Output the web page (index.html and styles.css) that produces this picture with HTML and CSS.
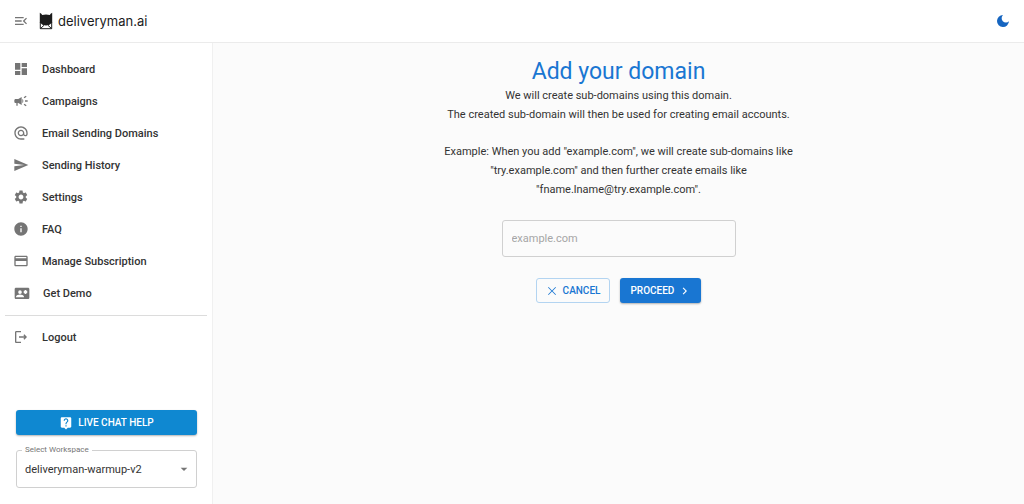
FILE: index.html
```html
<!DOCTYPE html>
<html lang="en">
<head>
<meta charset="utf-8">
<meta name="viewport" content="width=device-width, initial-scale=1">
<title>deliveryman.ai</title>
<link rel="stylesheet" href="styles.css">
</head>
<body>
<header class="topbar">
  <button class="icon-button" type="button" aria-label="Collapse menu">
    <svg class="icon" viewBox="0 0 24 24"><path d="M3 18h13v-2H3v2zm0-5h10v-2H3v2zm0-7v2h13V6H3zm18 9.59L17.42 12 21 8.41 19.59 7l-5 5 5 5L21 15.59z"/></svg>
  </button>
  <a class="brand" href="#">
    <svg class="brand-mark" viewBox="0 0 14 18"><path d="M.8.800Q2.600 1.600 3.200 3Q7 2 10.800 3Q11.400 1.600 13.200.800V10.500L10.500 12.700Q7 14.200 3.500 12.700L.8 10.500Z"/><path class="brand-line" d="M1.300 10V16.700H12.700V10M1.500 16.500L5 13.300M12.500 16.500L9 13.300"/></svg>
    <span>deliveryman.ai</span>
  </a>
  <button class="icon-button theme-toggle" type="button" aria-label="Toggle dark mode">
    <svg class="icon" viewBox="0 0 24 24"><path d="M12 3a9 9 0 1 0 9 9.500a5.500 5.500 0 0 1-9-9.500z"/></svg>
  </button>
</header>
<div class="shell">
  <aside class="sidebar">
    <nav class="nav">
      <a class="nav-item" href="#"><svg class="icon" viewBox="0 0 24 24"><path d="M3 13h8V3H3v10zm0 8h8v-6H3v6zm10 0h8V11h-8v10zm0-18v6h8V3h-8z"/></svg>Dashboard</a>
      <a class="nav-item" href="#"><svg class="icon" viewBox="0 0 24 24"><path d="M18 11v2h4v-2h-4zm-2 6.610c.96.710 2.210 1.650 3.200 2.390.4-.53.8-1.070 1.200-1.600-.99-.74-2.240-1.680-3.200-2.400-.4.540-.8 1.080-1.200 1.610zM20.400 5.600c-.4-.53-.8-1.070-1.200-1.600-.99.740-2.240 1.680-3.200 2.400.4.530.8 1.070 1.200 1.600.96-.72 2.210-1.650 3.200-2.400zM4 9c-1.100 0-2 .9-2 2v2c0 1.100.9 2 2 2h1v4h2v-4h1l5 3V6L8 9H4zm11.500 3c0-1.330-.58-2.530-1.500-3.350v6.690c.92-.81 1.500-2.010 1.500-3.340z"/></svg>Campaigns</a>
      <a class="nav-item" href="#"><svg class="icon" viewBox="0 0 24 24"><path d="M12 1.950c-5.520 0-10 4.480-10 10s4.480 10 10 10h5v-2h-5c-4.340 0-8-3.660-8-8s3.660-8 8-8 8 3.660 8 8v1.430c0 .79-.71 1.570-1.500 1.570s-1.500-.78-1.500-1.570v-1.430c0-2.760-2.240-5-5-5s-5 2.240-5 5 2.240 5 5 5c1.380 0 2.640-.56 3.540-1.470.65.890 1.770 1.470 2.960 1.470 1.970 0 3.500-1.600 3.500-3.570v-1.430c0-5.520-4.480-10-10-10zm0 13c-1.660 0-3-1.340-3-3s1.340-3 3-3 3 1.340 3 3-1.340 3-3 3z"/></svg>Email Sending Domains</a>
      <a class="nav-item" href="#"><svg class="icon" viewBox="0 0 24 24"><path d="M2.010 21L23 12 2.010 3 2 10l15 2-15 2z"/></svg>Sending History</a>
      <a class="nav-item" href="#"><svg class="icon" viewBox="0 0 24 24"><path d="M19.140 12.940c.04-.3.060-.61.060-.94 0-.32-.02-.64-.07-.94l2.030-1.580c.18-.14.230-.41.120-.61l-1.920-3.320c-.12-.22-.37-.29-.59-.22l-2.390.96c-.5-.38-1.030-.7-1.620-.94l-.36-2.540c-.04-.24-.24-.41-.48-.41h-3.840c-.24 0-.43.170-.47.410l-.36 2.540c-.59.240-1.130.570-1.620.940l-2.390-.96c-.22-.08-.47 0-.59.220L2.740 8.870c-.12.210-.08.470.120.610l2.030 1.580c-.05.300-.09.630-.09.940s.02.640.070.940l-2.030 1.580c-.18.140-.23.410-.12.610l1.920 3.320c.12.220.37.290.59.220l2.390-.96c.5.380 1.030.700 1.620.940l.36 2.540c.05.240.24.410.48.410h3.840c.24 0 .44-.17.470-.41l.36-2.540c.59-.24 1.130-.56 1.620-.94l2.390.96c.22.080.47 0 .59-.22l1.920-3.320c.12-.22.070-.47-.12-.61l-2.010-1.580zM12 15.600c-1.980 0-3.600-1.620-3.600-3.600s1.620-3.600 3.600-3.600 3.600 1.620 3.600 3.600-1.620 3.600-3.600 3.600z"/></svg>Settings</a>
      <a class="nav-item" href="#"><svg class="icon" viewBox="0 0 24 24"><path d="M12 2C6.480 2 2 6.480 2 12s4.480 10 10 10 10-4.480 10-10S17.520 2 12 2zm1 15h-2v-6h2v6zm0-8h-2V7h2v2z"/></svg>FAQ</a>
      <a class="nav-item" href="#"><svg class="icon" viewBox="0 0 24 24"><path d="M20 4H4c-1.110 0-1.990.89-1.990 2L2 18c0 1.110.89 2 2 2h16c1.110 0 2-.89 2-2V6c0-1.110-.89-2-2-2zm0 14H4v-6h16v6zm0-10H4V6h16v2z"/></svg>Manage Subscription</a>
      <a class="nav-item nav-item-demo" href="#"><svg class="icon" viewBox="0 0 24 24"><path fill-rule="evenodd" d="M21 4H3c-1.100 0-2 .9-2 2v13c0 1.100.9 2 2 2h18c1.100 0 2-.9 2-2V6c0-1.100-.9-2-2-2zM9 8a2.700 2.700 0 1 1 0 5.400A2.700 2.700 0 0 1 9 8zm6 10.500H3v-1c0-2 4-3.100 6-3.100s6 1.100 6 3.100v1zM17.850 13.500h-1.390l-.2-1.300-1.200.5-.8-1.300 1-.9-1-.9.8-1.300 1.200.5.200-1.300h1.500l.2 1.300 1.200-.5.800 1.300-1 .9 1 .9-.8 1.300-1.200-.5z"/></svg>Get Demo</a>
    </nav>
    <hr class="divider">
    <a class="nav-item" href="#"><svg class="icon" viewBox="0 0 24 24"><path d="M17 8l-1.410 1.410L17.170 11H9v2h8.170l-1.580 1.580L17 16l4-4-4-4zM5 5h7V3H5c-1.100 0-2 .9-2 2v14c0 1.100.9 2 2 2h7v-2H5V5z"/></svg>Logout</a>
    <div class="sidebar-foot">
      <button class="button button-chat" type="button"><svg class="icon icon-small" viewBox="0 0 24 24"><path d="M19 2H5c-1.110 0-2 .9-2 2v14c0 1.100.89 2 2 2h4l3 3 3-3h4c1.100 0 2-.9 2-2V4c0-1.100-.9-2-2-2zm-6 16h-2v-2h2v2zm2.070-7.750l-.9.920C13.450 11.900 13 12.500 13 14h-2v-.5c0-1.100.45-2.100 1.170-2.830l1.240-1.260c.37-.36.590-.86.590-1.410 0-1.100-.9-2-2-2s-2 .9-2 2H8c0-2.210 1.790-4 4-4s4 1.790 4 4c0 .88-.36 1.680-.93 2.250z"/></svg>LIVE CHAT HELP</button>
      <fieldset class="workspace">
        <legend class="workspace-legend"><label for="workspace">Select Workspace</label></legend>
        <select class="workspace-select" id="workspace"><option>deliveryman-warmup-v2</option></select>
        <svg class="icon workspace-arrow" viewBox="0 0 24 24"><path d="M7 10l5 5 5-5z"/></svg>
      </fieldset>
    </div>
  </aside>
  <main class="content">
    <h1 class="title">Add your domain</h1>
    <p class="copy">We will create sub-domains using this domain.<br>The created sub-domain will then be used for creating email accounts.</p>
    <p class="copy">Example: When you add "example.com", we will create sub-domains like "try.example.com" and then further create emails like "fname.lname@try.example.com".</p>
    <form class="domain-form">
      <input class="domain-input" type="text" placeholder="example.com" aria-label="Domain">
      <div class="actions">
        <button class="button button-outline" type="button"><svg class="icon icon-action" viewBox="0 0 24 24"><path d="M20 5.200L18.800 4 12 10.800 5.200 4 4 5.200 10.800 12 4 18.800 5.200 20 12 13.200 18.800 20 20 18.800 13.200 12z"/></svg>CANCEL</button>
        <button class="button button-primary" type="button">PROCEED<svg class="icon icon-action" viewBox="0 0 24 24"><path d="M9 5L7.400 6.600 12.800 12l-5.400 5.400L9 19l7-7z"/></svg></button>
      </div>
    </form>
  </main>
</div>
</body>
</html>
```
FILE: styles.css
```css
* { box-sizing: border-box; }

body {
  margin: 0;
  min-height: 100vh;
  display: flex;
  flex-direction: column;
  background: #fbfbfb;
  color: #333;
  font-family: Roboto, "Liberation Sans", sans-serif;
  font-size: 11px;
}

a { color: inherit; text-decoration: none; }

.icon { width: 16px; height: 16px; flex: none; fill: currentColor; }
.icon-small { width: 14px; height: 14px; }
.icon-action { width: 12px; height: 12px; }

.topbar {
  display: flex;
  align-items: center;
  height: 43px;
  padding: 0 13px;
  background: #fff;
  border-bottom: 1px solid #ebebeb;
}

.icon-button {
  display: flex;
  padding: 0;
  border: 0;
  background: none;
  color: #757575;
}

.theme-toggle { margin-left: auto; color: #1565c0; }

.brand {
  display: flex;
  align-items: center;
  gap: 5px;
  margin-left: 10px;
  color: #1c1c1c;
  font-family: Inter, sans-serif;
  font-size: 13px;
}

.brand-mark { width: 14px; height: 18px; fill: #1c1c1c; }
.brand-line { fill: none; stroke: #1c1c1c; }

.shell { flex: 1; display: flex; }

.sidebar {
  width: 213px;
  flex: none;
  display: flex;
  flex-direction: column;
  padding-top: 10px;
  background: #fff;
  border-right: 1px solid #f0f0f0;
}

.nav { display: flex; flex-direction: column; }

.nav-item {
  display: flex;
  align-items: center;
  gap: 13px;
  height: 32px;
  padding: 0 13px;
  font-weight: 500;
}

.nav-item .icon { color: #757575; }
.nav-item-demo { padding-left: 14px; }

.divider {
  width: auto;
  margin: 6px 5px 5px;
  border: 0;
  border-top: 1px solid #dcdcdc;
}

.sidebar-foot {
  display: flex;
  flex-direction: column;
  gap: 10px;
  margin-top: auto;
  padding: 16px 15px 16px 16px;
}

.button {
  display: flex;
  align-items: center;
  justify-content: center;
  height: 25px;
  gap: 5px;
  padding: 0 10px;
  border: 0;
  border-radius: 3px;
  font-family: inherit;
  font-size: 10px;
  font-weight: 500;
}

.button-chat {
  background: #0f88d1;
  color: #fff;
  box-shadow: 0 1px 2px rgba(0, 0, 0, 0.3);
}

.workspace {
  position: relative;
  min-width: 0;
  margin: 0;
  padding: 0;
  border: 1px solid #d0d0d0;
  border-radius: 3px;
}

.workspace-legend {
  margin-left: 5px;
  padding: 0 3px;
  color: #757575;
  font-size: 8px;
  line-height: 10px;
}

.workspace-select {
  display: block;
  width: 100%;
  height: 32px;
  padding: 0 24px 4px 8px;
  border: 0;
  background: none;
  color: #333;
  font: inherit;
  appearance: none;
}

.workspace-arrow {
  position: absolute;
  right: 4px;
  top: 6px;
  color: #757575;
  pointer-events: none;
}

.content {
  flex: 1;
  display: flex;
  flex-direction: column;
  align-items: center;
  padding: 15px 16px;
  text-align: center;
}

.title {
  margin: 0;
  color: #1976d2;
  font-size: 23px;
  font-weight: 400;
  line-height: 28px;
}

.copy {
  max-width: 370px;
  margin: 0 0 18px;
  line-height: 19px;
}

.domain-form {
  display: flex;
  flex-direction: column;
  align-items: center;
  gap: 21px;
  margin-top: 3px;
}

.domain-input {
  width: 234px;
  height: 37px;
  padding: 0 9px;
  border: 1px solid #d0d0d0;
  border-radius: 3px;
  background: none;
  color: #333;
  font: inherit;
}

.domain-input::placeholder { color: #a6a6a6; }

.actions { display: flex; gap: 10px; }

.button-outline {
  padding: 0 9px;
  border: 1px solid #b3d4f1;
  background: none;
  color: #1976d2;
}

.button-primary {
  background: #1976d2;
  color: #fff;
  box-shadow: 0 1px 2px rgba(0, 0, 0, 0.3);
}
```
